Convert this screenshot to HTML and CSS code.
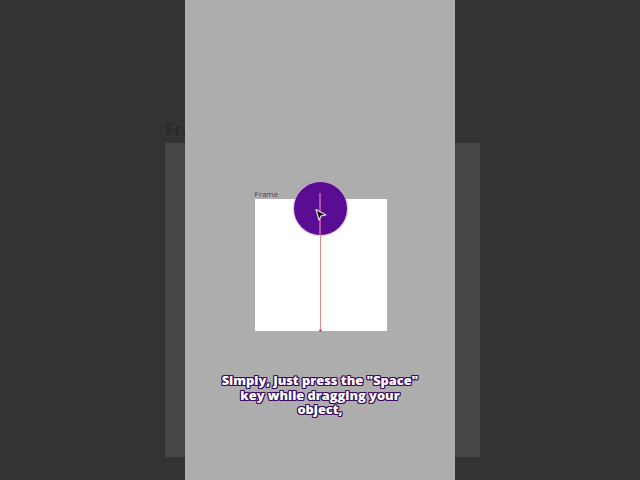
FILE: index.html
```html
<!DOCTYPE html>
<html>
<head>
<meta charset="utf-8">
<link rel="stylesheet" href="styles.css">
</head>
<body>
<div class="stage">
  <div class="backdrop">
    <div class="bd-title">Frame</div>
    <div class="bd-panel"></div>
  </div>
  <div class="column">
    <div class="canvas">
      <div class="frame-label">Frame</div>
      <div class="frame">
        <div class="guide"></div>
        <div class="dot dot-top"></div>
        <div class="dot dot-bottom"></div>
      </div>
      <div class="circle"></div>
      <svg class="cursor" width="14" height="14" viewBox="0 0 14 14">
        <path d="M2 1.5 L12 7 L7.2 7.8 L5 12 Z" fill="#111" stroke="#ddd" stroke-width="1.2" stroke-linejoin="round"/>
      </svg>
    </div>
    <div class="caption">
      <span class="line">Simply, just press the "Space"</span>
      <span class="line">key while dragging your</span>
      <span class="line">object,</span>
    </div>
  </div>
</div>
</body>
</html>
```
FILE: styles.css
```css
html, body {
  margin: 0;
  padding: 0;
  background: #333333;
  width: 640px;
  height: 480px;
  overflow: hidden;
}
.stage {
  position: relative;
  width: 640px;
  height: 480px;
}
.backdrop {
  position: absolute;
  left: 165px;
  top: 118px;
}
.bd-title {
  font-family: "Open Sans", sans-serif;
  font-weight: 700;
  font-size: 17px;
  color: #2a2a2a;
  line-height: 24px;
}
.bd-panel {
  width: 315px;
  height: 314px;
  background: #464646;
  margin-top: 1px;
}
.column {
  position: relative;
  margin-left: 185px;
  width: 270px;
  height: 480px;
  background: #adadad;
  display: flex;
  flex-direction: column;
  align-items: center;
}
.canvas {
  position: relative;
  margin-top: 188px;
  width: 132px;
  margin-left: 1px;
}
.frame-label {
  font-family: "Open Sans", sans-serif;
  font-size: 8px;
  color: #4a4a4a;
  line-height: 11px;
}
.frame {
  position: relative;
  width: 132px;
  height: 132px;
  background: #ffffff;
}
.guide {
  position: absolute;
  left: 65px;
  top: 0;
  width: 1px;
  height: 132px;
  background: #e08a8a;
}
.dot {
  position: absolute;
  width: 3px;
  height: 3px;
  border-radius: 50%;
  background: #d05a6a;
  left: 64px;
}
.dot-top { top: -1px; }
.dot-bottom { bottom: -1px; }
.circle {
  position: absolute;
  left: 39px;
  top: -6px;
  width: 53px;
  height: 53px;
  border-radius: 50%;
  background: #5a0c92;
  box-shadow: 0 0 0 1px rgba(210, 160, 230, 0.7);
}
.circle::after {
  content: "";
  position: absolute;
  left: 25px;
  top: 11px;
  width: 2px;
  height: 42px;
  background: #b04fa8;
}
.cursor {
  position: absolute;
  left: 59px;
  top: 20px;
}
.caption {
  margin-top: 42px;
  display: flex;
  flex-direction: column;
  align-items: center;
  font-family: "Open Sans", sans-serif;
  font-weight: 800;
  font-size: 12.8px;
  color: #ffffff;
  text-shadow:
    1px 0 0 #3b0a5e, -1px 0 0 #3b0a5e, 0 1px 0 #3b0a5e, 0 -1px 0 #3b0a5e,
    1px 1px 0 #3b0a5e, -1px -1px 0 #3b0a5e, 1px -1px 0 #3b0a5e, -1px 1px 0 #3b0a5e;
}
.line {
  display: block;
  height: 14.5px;
  line-height: 14.5px;
}
```
